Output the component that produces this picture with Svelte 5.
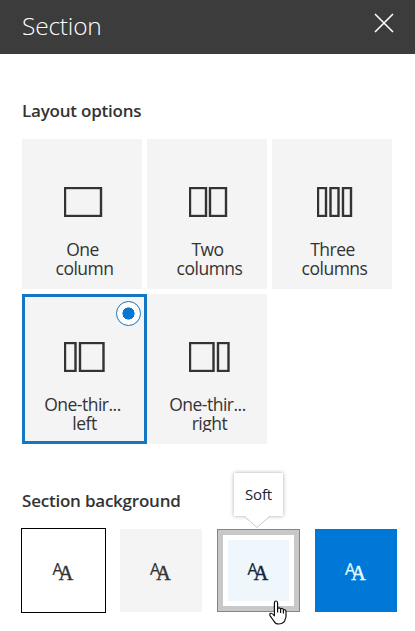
<script>
  const layouts = [
    { lines: ['One', 'column'], bars: [[1, 36]] },
    { lines: ['Two', 'columns'], bars: [[1, 16], [21, 16]] },
    { lines: ['Three', 'columns'], bars: [[1, 8], [13.5, 8], [26, 8]], shift: 3 },
    { lines: ['One-thir...', 'left'], bars: [[1, 10.5], [16, 23.5]], selected: true },
    { lines: ['One-thir...', 'right'], bars: [[1, 23.5], [29, 10.5]] }
  ];
  const swatches = ['none', 'neutral', 'soft', 'strong'];
</script>

<main>
  <header>
    <h1>Section</h1>
    <button class="close" aria-label="Close">
      <svg width="20" height="20" viewBox="0 0 20 20"><path d="M1 1L19 19M19 1L1 19" /></svg>
    </button>
  </header>

  <h2>Layout options</h2>
  <div class="tiles">
    {#each layouts as item}
      <button class="tile" class:selected={item.selected}>
        <svg class="layout" width="42" height="30" viewBox="0 0 42 30" style:margin-left="{item.shift ?? 0}px">
          {#each item.bars as [x, w]}
            <rect {x} y="1" width={w} height="28" />
          {/each}
        </svg>
        <span class="label"><span class="first">{item.lines[0]}</span><span>{item.lines[1]}</span></span>
        {#if item.selected}<span class="radio"></span>{/if}
      </button>
    {/each}
  </div>

  <h2 class="background-title">Section background</h2>
  <div class="swatches">
    {#each swatches as kind}
      <button class="swatch {kind}">
        <span class="sample"><span class="sans">A</span><span class="serif">A</span></span>
        {#if kind === 'soft'}
          <span class="tip">Soft</span>
          <svg class="beak" width="28" height="15" viewBox="0 0 28 15">
            <path d="M1 2L14 13.5L27 2V0H1Z" fill="#fff" />
            <path d="M1 2L14 13.5L27 2" fill="none" stroke="#c7c7c7" />
          </svg>
          <svg class="hand" width="18" height="25" viewBox="0 0 18 25">
            <path d="M5.4 14.5V3Q5.4 1 7 1T8.6 3V8.5Q10.2 7 11.6 8.8Q13.4 7.7 14.4 9.7Q17 9 17 12V16Q17 18.2 15.8 20V21Q13.5 24 9.5 24Q6.2 24 4.8 21L1.2 15.8Q.2 14 1.6 13.3Q3 12.8 5.4 15.8Z" />
            <path d="M8.6 8V12.5M11.6 9V13M14.4 10V13.5" />
          </svg>
        {/if}
      </button>
    {/each}
  </div>
</main>

<style>
  :global(body) { margin: 0; background: #fff; }
  main { width: 415px; height: 631px; overflow: hidden; background: #fff; color: #333; font-family: 'Open Sans', 'Noto Sans', sans-serif; }
  button { border: 0; padding: 0; margin: 0; font: inherit; color: inherit; background: none; position: relative; box-sizing: border-box; }
  header { height: 54px; background: #3c3c3c; color: #fff; display: flex; justify-content: space-between; box-sizing: border-box; padding: 0 21px 0 22px; }
  h1 { margin: 0; font-size: 24.5px; line-height: 52px; font-weight: 300; letter-spacing: -.2px; }
  .close { width: 20px; height: 20px; margin-top: 12.5px; }
  .close svg { display: block; fill: none; stroke: #fff; stroke-width: 1.6; }
  h2 { margin: 44px 0 0 22px; font-size: 17px; line-height: 26px; height: 26px; font-weight: 600; letter-spacing: -.22px; white-space: nowrap; }
  .tiles { display: grid; grid-template-columns: repeat(3, 120px); grid-auto-rows: 150px; gap: 5px; margin: 15px 0 0 22px; }
  .tile { width: 120px; height: 150px; background: #f4f4f4; display: flex; flex-direction: column; align-items: flex-start; padding: 48px 0 0 42px; }
  .selected { width: 125px; border: 3px solid #1377c4; padding: 45px 0 0 39px; }
  .layout { display: block; flex: none; fill: none; stroke: #333; stroke-width: 2.4; }
  .label { width: 120px; height: 40px; margin: 20px 0 0 -42px; overflow: hidden; display: flex; flex-direction: column; align-items: center; font-size: 17.5px; line-height: 19px; letter-spacing: -.5px; padding-top: 3px; box-sizing: border-box; padding-left: 5px; }
  .first { position: relative; left: -2px; }
  .radio { position: absolute; right: 3px; top: 4px; width: 25px; height: 25px; box-sizing: border-box; border: 1.5px solid #1377c4; border-radius: 50%; background: radial-gradient(circle, #0877d1 5.8px, #fff 6.3px); }
  .background-title { margin-top: 44px; }
  .swatches { display: grid; grid-template-columns: 83px 82px 83px 82px; column-gap: 15px; margin: 15px 0 0 22px; }
  .swatch { height: 83px; display: flex; align-items: center; justify-content: center; }
  .none { outline: 1px solid #000; }
  .neutral { background: #f4f4f4; }
  .soft { background: #eff6fc; border: 1px solid #858585; box-shadow: inset 0 0 0 5px #c8c8c8, inset 0 0 0 10px #fff; color: #142532; }
  .strong { background: #0078d7; color: #e5ffff; }
  .sample { display: flex; align-items: flex-start; width: 22px; height: 24px; line-height: 20px; }
  .sans { font-size: 16px; -webkit-text-stroke: .2px currentColor; }
  .serif { font: 20px/22px 'Liberation Serif', serif; margin: 3px 0 0 -4px; -webkit-text-stroke: .45px currentColor; }
  .tip { position: absolute; left: 16px; top: -57px; width: 49px; height: 43px; line-height: 43px; font-size: 15px; background: #fff; box-shadow: 0 0 4px #aaa; letter-spacing: -.1px; }
  .beak { position: absolute; left: 25px; top: -16px; }
  .hand { position: absolute; left: 51px; top: 70px; fill: #fff; stroke: #111; stroke-width: 1.2; stroke-linejoin: round; }
</style>
